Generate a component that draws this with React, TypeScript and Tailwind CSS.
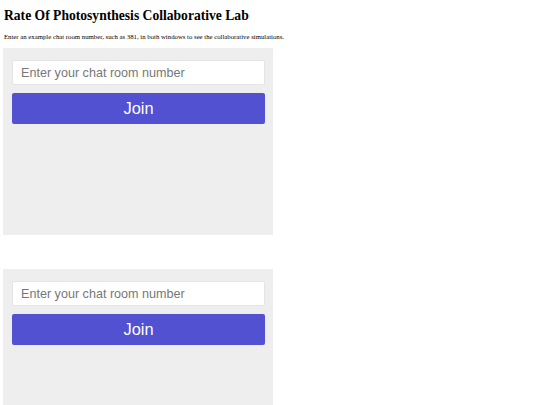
function RoomPanel() {
  return (
    <div className="ml-[3px] w-[270px] h-[187px] bg-[#eeeeee] pt-[12px] pl-[9px] pr-[8px] flex flex-col gap-[8px]">
      <input
        type="text"
        placeholder="Enter your chat room number"
        className="h-[25px] w-full bg-white border border-[#e4e4e4] rounded-[2px] px-[8px] text-[12.6px] text-[#333] placeholder:text-[#777] outline-none"
        style={{ fontFamily: '"Liberation Sans", Arial, sans-serif' }}
      />
      <button
        type="button"
        className="h-[31px] w-full bg-[#5151d1] rounded-[2px] text-white text-[16.4px] leading-none"
        style={{ fontFamily: '"Liberation Sans", Arial, sans-serif' }}
      >
        Join
      </button>
    </div>
  );
}

export default function App() {
  return (
    <div className="w-[540px] h-[405px] overflow-hidden bg-white" style={{ fontFamily: '"Liberation Serif", "Times New Roman", serif' }}>
      <h1 className="pl-[4px] pt-[7px] text-[13.6px] leading-[17px] font-bold text-black">
        Rate Of Photosynthesis Collaborative Lab
      </h1>
      <p className="pl-[4px] mt-[9px] text-[6.75px] leading-[8px] text-black">
        Enter an example chat room number, such as 381, in both windows to see the collaborative simulations.
      </p>
      <div className="mt-[7px] flex flex-col gap-[34px]">
        <RoomPanel />
        <RoomPanel />
      </div>
    </div>
  );
}
